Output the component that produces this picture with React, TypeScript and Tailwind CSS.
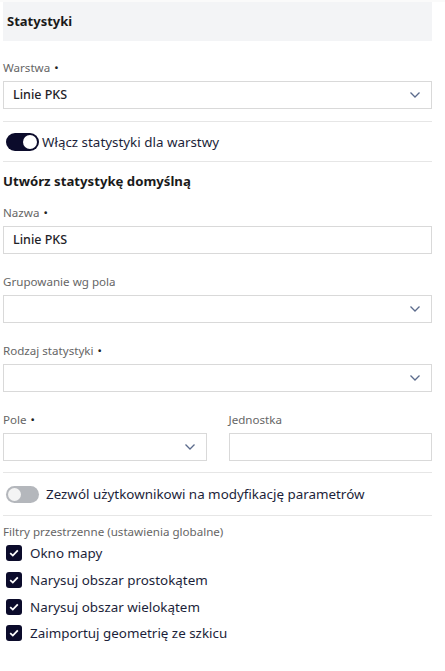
const font = { fontFamily: '"Noto Sans", "Open Sans", sans-serif' }

function Chevron() {
  return (
    <svg width="12" height="8" viewBox="0 0 12 8" className="text-[#5b6b8c]">
      <path d="M1.5 1.5 L6 6 L10.5 1.5" fill="none" stroke="currentColor" strokeWidth="1.3" />
    </svg>
  )
}

function Label({ children, req }: { children: React.ReactNode; req?: boolean }) {
  return (
    <div className="h-[16px] text-[11.6px] leading-[16px] text-[#666]">
      {children}
      {req && <span className="ml-1 text-[#222]">•</span>}
    </div>
  )
}

function Select({ value }: { value?: string }) {
  return (
    <div className="mt-[5px] flex h-[28px] items-center justify-between border border-[#d9d9d9] bg-white pl-[9px] pr-[10px]">
      <span className="text-[12.5px] font-medium text-[#1f2328]">{value}</span>
      <Chevron />
    </div>
  )
}

function Input({ value }: { value?: string }) {
  return (
    <div className="mt-[5px] flex h-[28px] items-center border border-[#d9d9d9] bg-white pl-[9px]">
      <span className="text-[12.5px] font-medium text-[#1f2328]">{value}</span>
    </div>
  )
}

function Toggle({ on }: { on?: boolean }) {
  return (
    <span
      className={
        on
          ? 'flex h-[18px] w-[33px] items-center justify-end rounded-full bg-[#0b0b2b] pr-[2px]'
          : 'flex h-[17px] w-[33px] items-center justify-start rounded-full bg-[#b4b7bc] pl-[2px]'
      }
    >
      <span className={on ? 'h-[14px] w-[14px] rounded-full bg-white' : 'h-[13px] w-[13px] rounded-full bg-[#f4f4f4]'} />
    </span>
  )
}

function Check({ label }: { label: string }) {
  return (
    <div className="flex h-[26.7px] items-center gap-[8px] pl-[3px]">
      <span className="flex h-[16px] w-[16px] items-center justify-center rounded-[3px] bg-[#0b0b2b]">
        <svg width="10" height="8" viewBox="0 0 10 8">
          <path d="M1.2 4.2 L3.8 6.6 L8.8 1.4" fill="none" stroke="white" strokeWidth="1.8" />
        </svg>
      </span>
      <span className="text-[13.4px] leading-5 text-[#1c1f3a]">{label}</span>
    </div>
  )
}

export default function App() {
  return (
    <div className="min-h-[671px] bg-white" style={font}>
      <div className="h-[2px] bg-[#fafafa]" />
      <div className="w-[432px] pl-[3px]">
        <div className="flex h-[39px] items-center bg-[#f3f4f6] px-[4px]">
          <h2 className="text-[13px] font-bold text-[#1a1a1a]">Statystyki</h2>
        </div>

        <div className="mt-[19px]">
          <Label req>Warstwa</Label>
          <Select value="Linie PKS" />
        </div>

        <div className="mt-[12px] border-t border-[#e6e6e6]" />
        <div className="flex h-[39px] items-center gap-[3px] pl-[3px]">
          <Toggle on />
          <span className="text-[13.4px] leading-5 text-[#1c1f3a]">Włącz statystyki dla warstwy</span>
        </div>
        <div className="border-t border-[#e6e6e6]" />

        <h3 className="mt-[9px] text-[13.2px] font-bold leading-5 text-[#1a1a1a]">Utwórz statystykę domyślną</h3>

        <div className="mt-[14px]">
          <Label req>Nazwa</Label>
          <Input value="Linie PKS" />
        </div>

        <div className="mt-[20px]">
          <Label>Grupowanie wg pola</Label>
          <Select />
        </div>

        <div className="mt-[20px]">
          <Label req>Rodzaj statystyki</Label>
          <Select />
        </div>

        <div className="mt-[20px] grid grid-cols-2 gap-[22px]">
          <div>
            <Label req>Pole</Label>
            <Select />
          </div>
          <div>
            <Label>Jednostka</Label>
            <Input />
          </div>
        </div>

        <div className="mt-[11px] border-t border-[#e6e6e6]" />
        <div className="flex h-[42px] items-center gap-[7px] pl-[3px]">
          <Toggle />
          <span className="text-[13.4px] leading-5 text-[#1c1f3a]">Zezwól użytkownikowi na modyfikację parametrów</span>
        </div>
        <div className="border-t border-[#e6e6e6]" />

        <div className="mt-[8px]">
          <Label>Filtry przestrzenne (ustawienia globalne)</Label>
        </div>
        <div>
          <Check label="Okno mapy" />
          <Check label="Narysuj obszar prostokątem" />
          <Check label="Narysuj obszar wielokątem" />
          <Check label="Zaimportuj geometrię ze szkicu" />
        </div>
      </div>
    </div>
  )
}
